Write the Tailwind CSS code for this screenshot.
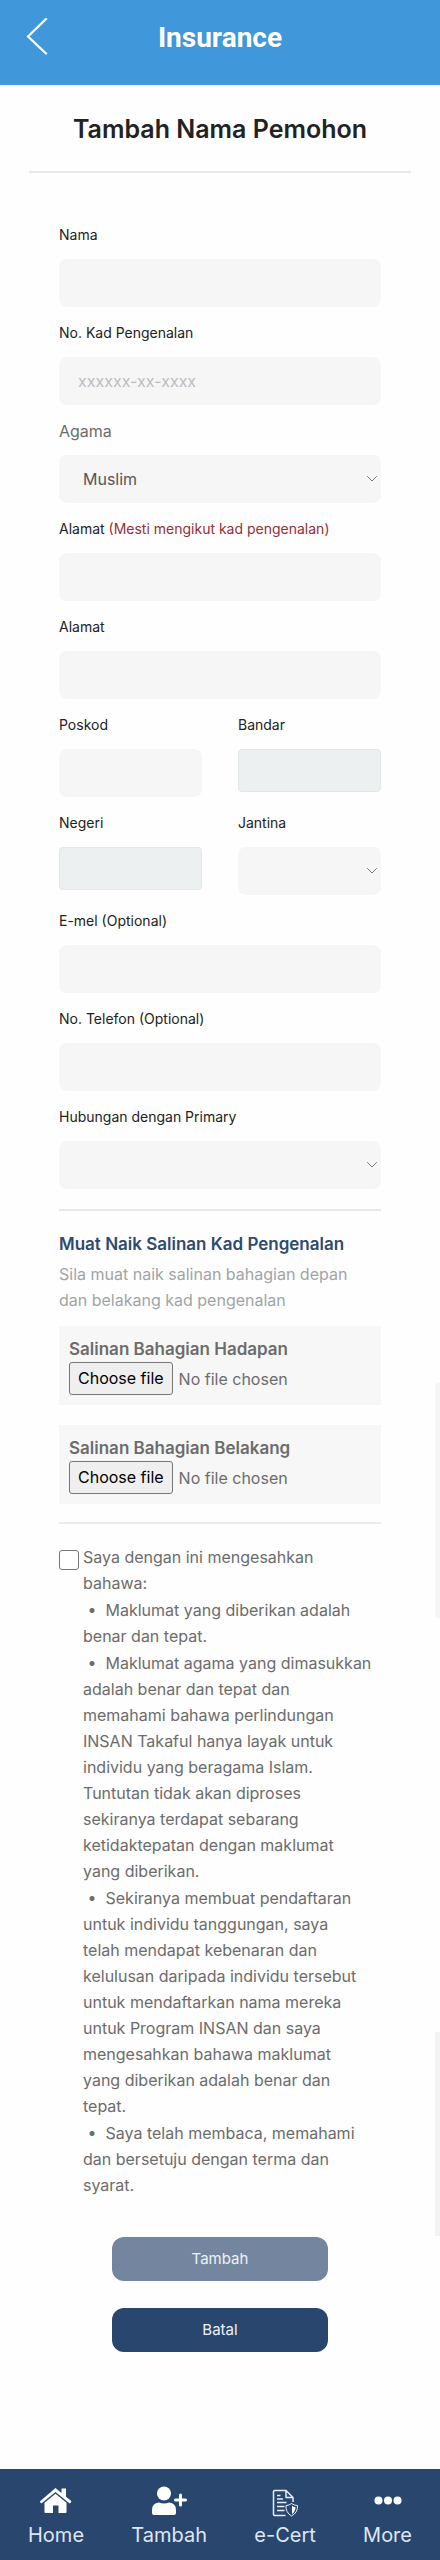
<!DOCTYPE html>
<html lang="ms">
<head>
  <meta charset="UTF-8" />
  <meta name="viewport" content="width=device-width, initial-scale=1.0"/>
  <title>Insurance</title>
  <script src="https://cdn.jsdelivr.net/npm/@tailwindcss/browser@4"></script>
</head>

<body class="relative bg-[#fefefe] font-['Inter',sans-serif] text-base text-[#6c6c6c] min-h-screen flex flex-col">

  <!-- Header -->
  <header class="bg-[#4097d9] h-[85px] px-6 pb-[10px] grid grid-cols-[1fr_auto_1fr] items-center text-white">
    <a href="#" aria-label="Kembali">
      <svg class="w-6 h-10" viewBox="0 0 24 40" fill="none" stroke="currentColor" stroke-width="2.4" stroke-linecap="round" stroke-linejoin="round">
        <path d="M22 1L4 18.500L22 35.500"/>
      </svg>
    </a>
    <h1 class="font-['Roboto',sans-serif] text-[28px] font-bold">Insurance</h1>
  </header>

  <main class="flex-1">
    <h2 class="mx-[29px] pt-[26px] pb-6 border-b-2 border-[#e8e8e8] text-center text-[25px] leading-9 font-semibold text-[#222]">Tambah Nama Pemohon</h2>

    <form class="mx-[59px] pt-[50px]">

      <!-- Maklumat pemohon -->
      <div class="space-y-[14px] text-sm leading-6 text-[#222]">
        <div>
          <label for="nama" class="block mb-3">Nama</label>
          <input id="nama" type="text" class="block w-full h-12 px-5 rounded-lg bg-[#f6f6f7]">
        </div>
        <div>
          <label for="ic" class="block mb-3">No. Kad Pengenalan</label>
          <input id="ic" type="text" placeholder="xxxxxx-xx-xxxx" class="block w-full h-12 px-[19px] rounded-lg bg-[#f6f6f7] text-base placeholder:text-[#bcbcc0]">
        </div>
        <div>
          <label for="agama" class="block mb-3 text-base leading-6 text-[#6c6c6c]">Agama</label>
          <div class="grid items-center">
            <select id="agama" class="col-start-1 row-start-1 appearance-none w-full h-12 px-6 rounded-lg bg-[#f6f6f7] text-base text-[#555]">
              <option>Muslim</option>
              <option>Bukan Muslim</option>
            </select>
            <svg class="col-start-1 row-start-1 justify-self-end mr-1 w-[10px] h-[6px] pointer-events-none" viewBox="0 0 10 6" fill="none" stroke="#777" stroke-linecap="round"><path d="M.5 .5L5 5L9.500 .5"/></svg>
          </div>
        </div>
        <div>
          <label for="alamat1" class="block mb-3">Alamat <span class="text-[#952f38]">(Mesti mengikut kad pengenalan)</span></label>
          <input id="alamat1" type="text" class="block w-full h-12 px-5 rounded-lg bg-[#f6f6f7]">
        </div>
        <div>
          <label for="alamat2" class="block mb-3">Alamat</label>
          <input id="alamat2" type="text" class="block w-full h-12 px-5 rounded-lg bg-[#f6f6f7]">
        </div>
        <div class="grid grid-cols-2 gap-9">
          <div>
            <label for="poskod" class="block mb-3">Poskod</label>
            <input id="poskod" type="text" class="block w-full h-12 px-5 rounded-lg bg-[#f6f6f7]">
          </div>
          <div>
            <label for="bandar" class="block mb-3">Bandar</label>
            <input id="bandar" type="text" disabled class="block w-full h-[43px] px-3 rounded-sm border border-[#e2e7e9] bg-[#ecf0f1]">
          </div>
        </div>
        <div class="grid grid-cols-2 gap-9">
          <div>
            <label for="negeri" class="block mb-3">Negeri</label>
            <input id="negeri" type="text" disabled class="block w-full h-[43px] px-3 rounded-sm border border-[#e2e7e9] bg-[#ecf0f1]">
          </div>
          <div>
            <label for="jantina" class="block mb-3">Jantina</label>
            <div class="grid items-center">
              <select id="jantina" class="col-start-1 row-start-1 appearance-none w-full h-12 px-6 rounded-lg bg-[#f6f6f7] text-base text-[#555]">
                <option></option>
                <option>Lelaki</option>
                <option>Perempuan</option>
              </select>
              <svg class="col-start-1 row-start-1 justify-self-end mr-1 w-[10px] h-[6px] pointer-events-none" viewBox="0 0 10 6" fill="none" stroke="#777" stroke-linecap="round"><path d="M.5 .5L5 5L9.500 .5"/></svg>
            </div>
          </div>
        </div>
        <div>
          <label for="emel" class="block mb-3">E-mel (Optional)</label>
          <input id="emel" type="email" class="block w-full h-12 px-5 rounded-lg bg-[#f6f6f7]">
        </div>
        <div>
          <label for="telefon" class="block mb-3">No. Telefon (Optional)</label>
          <input id="telefon" type="tel" class="block w-full h-12 px-5 rounded-lg bg-[#f6f6f7]">
        </div>
        <div>
          <label for="hubungan" class="block mb-3">Hubungan dengan Primary</label>
          <div class="grid items-center">
            <select id="hubungan" class="col-start-1 row-start-1 appearance-none w-full h-12 px-6 rounded-lg bg-[#f6f6f7] text-base text-[#555]">
              <option></option>
              <option>Pasangan</option>
              <option>Anak</option>
            </select>
            <svg class="col-start-1 row-start-1 justify-self-end mr-1 w-[10px] h-[6px] pointer-events-none" viewBox="0 0 10 6" fill="none" stroke="#777" stroke-linecap="round"><path d="M.5 .5L5 5L9.500 .5"/></svg>
          </div>
        </div>
      </div>

      <!-- Muat naik -->
      <section class="mt-5 pt-5 border-t-2 border-[#e8e8e8]">
        <h3 class="text-[17px] leading-[26px] font-semibold text-[#2d4a70]">Muat Naik Salinan Kad Pengenalan</h3>
        <p class="mt-1 leading-[26px] text-[#9fa5a6]">Sila muat naik salinan bahagian depan<br>dan belakang kad pengenalan</p>

        <div class="mt-[13px] h-[79px] px-[10px] pt-[10px] bg-[#f7f7f7]">
          <p class="text-[17px] leading-[26px] font-semibold">Salinan Bahagian Hadapan</p>
          <div class="flex items-center gap-[6px]">
            <input id="hadapan" type="file" class="sr-only">
            <label for="hadapan" class="h-[33px] px-2 rounded-[3px] border border-[#767676] bg-[#efefef] leading-[31px] text-black">Choose file</label>
            <span>No file chosen</span>
          </div>
        </div>
        <div class="mt-5 h-[79px] px-[10px] pt-[10px] bg-[#f7f7f7]">
          <p class="text-[17px] leading-[26px] font-semibold">Salinan Bahagian Belakang</p>
          <div class="flex items-center gap-[6px]">
            <input id="belakang" type="file" class="sr-only">
            <label for="belakang" class="h-[33px] px-2 rounded-[3px] border border-[#767676] bg-[#efefef] leading-[31px] text-black">Choose file</label>
            <span>No file chosen</span>
          </div>
        </div>
      </section>

      <!-- Pengesahan -->
      <div class="mt-[18px] pt-5 border-t-2 border-[#ebebeb] flex items-start gap-1">
        <input id="setuju" type="checkbox" class="appearance-none shrink-0 mt-[6px] size-5 rounded-[3px] border border-[#767676] bg-white checked:bg-[#29466f]">
        <label for="setuju" class="block space-y-px leading-[26px]">
          <span class="block">Saya dengan ini mengesahkan<br>bahawa:</span>
          <span class="block">&nbsp;•&nbsp; Maklumat yang diberikan adalah<br>benar dan tepat.</span>
          <span class="block">&nbsp;•&nbsp; Maklumat agama yang dimasukkan<br>adalah benar dan tepat dan<br>memahami bahawa perlindungan<br>INSAN Takaful hanya layak untuk<br>individu yang beragama Islam.<br>Tuntutan tidak akan diproses<br>sekiranya terdapat sebarang<br>ketidaktepatan dengan maklumat<br>yang diberikan.</span>
          <span class="block">&nbsp;•&nbsp; Sekiranya membuat pendaftaran<br>untuk individu tanggungan, saya<br>telah mendapat kebenaran dan<br>kelulusan daripada individu tersebut<br>untuk mendaftarkan nama mereka<br>untuk Program INSAN dan saya<br>mengesahkan bahawa maklumat<br>yang diberikan adalah benar dan<br>tepat.</span>
          <span class="block">&nbsp;•&nbsp; Saya telah membaca, memahami<br>dan bersetuju dengan terma dan<br>syarat.</span>
        </label>
      </div>

      <div class="mt-[39px] mb-[117px] px-[53px] flex flex-col gap-[27px] text-[15px] text-[#eef2f8]">
        <button type="submit" disabled class="h-11 rounded-xl bg-[#74869f]">Tambah</button>
        <button type="button" class="h-11 rounded-xl bg-[#29466f]">Batal</button>
      </div>
    </form>
  </main>

  <!-- Menu bawah -->
  <nav class="h-[91px] px-7 pt-4 flex justify-between bg-[#29466f] text-xl leading-7 text-[#dfe6f2]">
    <a href="#" class="flex flex-col items-center gap-1">
      <svg class="w-8 h-8" viewBox="0 0 32 32" fill="white">
        <path d="M15.500 3L21.500 8V3.500H26V11.700L31 15.800Q31.600 16.500 31 17.200L30 18.200Q29.500 18.500 29 18.100L15.500 7L2 18.100Q1.500 18.500 1 18.200L.2 17.200Q-.2 16.500 .4 15.900Z"/>
        <path d="M15.500 8.700L26.500 17.700V27Q26.500 28 25.500 28H18.500V20.500H13V28H5.500Q4.500 28 4.500 27V17.700Z"/>
      </svg>
      <span>Home</span>
    </a>
    <a href="#" class="flex flex-col items-center gap-1">
      <svg class="w-9 h-8" viewBox="0 0 36 32" fill="white">
        <circle cx="13" cy="8.500" r="7"/>
        <path d="M8 17.500Q13 19.300 18 17.500Q25 18.200 25 25V28Q25 30 23 30H3Q1 30 1 28V25Q1 18.200 8 17.500Z"/>
        <path d="M29.500 10V20M24.500 15H34.500" stroke="white" stroke-width="3" stroke-linecap="round"/>
      </svg>
      <span>Tambah</span>
    </a>
    <a href="#" class="flex flex-col items-center gap-1">
      <svg class="w-7 h-8" viewBox="0 0 28 32" fill="none" stroke="#e8eef8" stroke-width="1.500" stroke-linejoin="round">
        <path d="M14.500 30.500H3.500Q2.500 30.500 2.500 29.500V6.500Q2.500 5.500 3.500 5.500H15L22 12.500V17M15 5.500V12.500H22"/>
        <path d="M6 10.500H9.500M6 14H12M6 17.500H15.500M6 21.500H13.500M6 25.500H13.500" stroke-width="1.300"/>
        <path d="M20.500 18.500Q23.500 20.500 26.500 20.500Q27 27.500 20.500 31Q14.500 27.500 15 20.500Q18 20.500 20.500 18.500Z" stroke-width="1"/>
        <path d="M21 20.800Q22.500 22 24.500 22.200Q24.500 26.500 21 29Z" fill="white" stroke="none"/>
      </svg>
      <span>e-Cert</span>
    </a>
    <a href="#" class="flex flex-col items-center gap-1">
      <svg class="w-7 h-8" viewBox="0 0 28 32" fill="white">
        <circle cx="4.500" cy="15.500" r="4"/>
        <circle cx="14" cy="15.500" r="4"/>
        <circle cx="23.500" cy="15.500" r="4"/>
      </svg>
      <span>More</span>
    </a>
  </nav>

  <!-- Panel tepi -->
  <div class="absolute right-0 top-[1383px] w-[5px] h-[235px] rounded-l-sm bg-[#f5f5f5]"></div>
  <div class="absolute right-0 top-[2032px] w-[5px] h-[204px] bg-[#f3f3f3]"></div>

</body>
</html>
